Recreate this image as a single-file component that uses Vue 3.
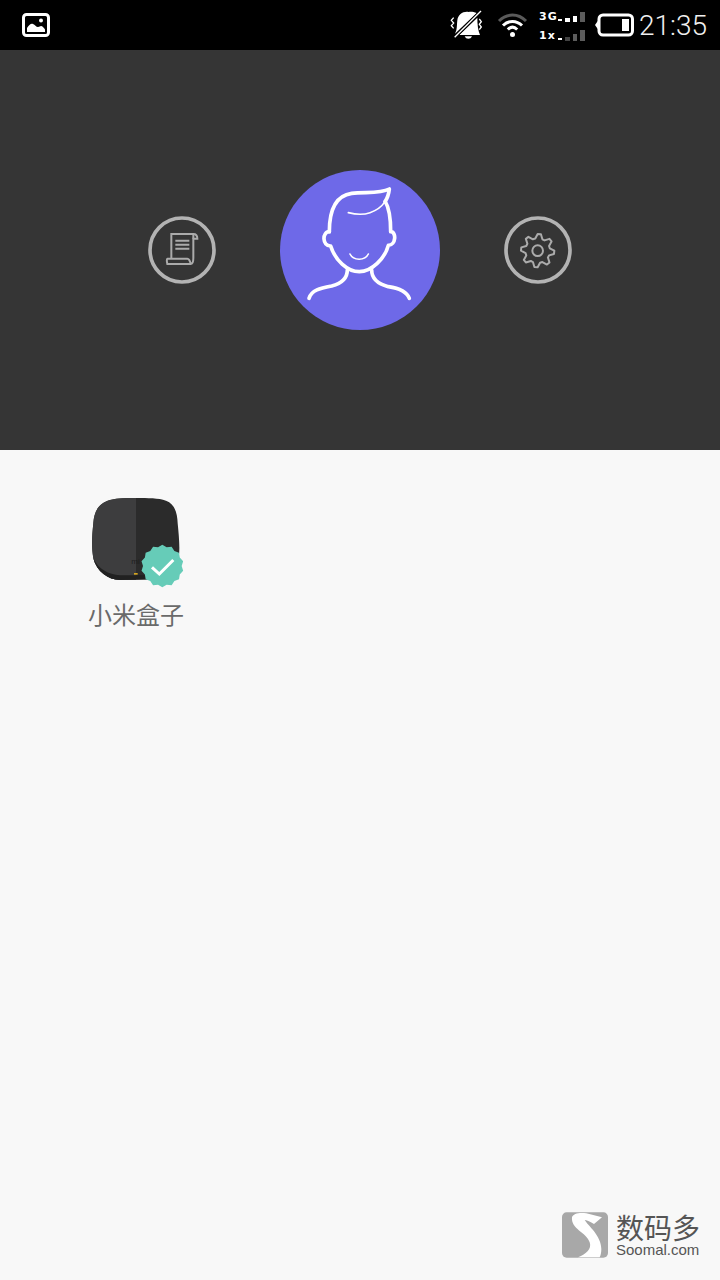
<template>
  <div class="page">
    <div class="status-bar">
      <svg class="pic-icon" width="28" height="24" viewBox="0 0 28 24">
        <rect x="1.500" y="1.500" width="25" height="21" rx="3" fill="none" stroke="#fff" stroke-width="3" />
        <path d="M5 19v-4c2-3 4-5 6-4 2 .8 3 3 5 3 1.500 0 2-1 3-1 1.500 0 3 2 4 3.500V19z" fill="#fff" />
        <circle cx="19" cy="7.500" r="2" fill="#fff" />
      </svg>
      <div class="status-right">
        <svg class="bell" width="40" height="36" viewBox="0 0 120 108">
          <path d="M92 18C82 14 74 14 68 15 52 12 36 22 34 40 32 56 34 68 27 80Z" fill="#fff" />
          <path d="M94 32C94 52 96 70 102 84H40Z" fill="#fff" />
          <path d="M56 88C60 98 74 98 78 88Z" fill="#fff" />
          <path d="M105 12 26 91" stroke="#000" stroke-width="9" />
          <path d="M105 12 26 91" stroke="#fff" stroke-width="4" />
          <path d="M23 32 16 40 23 48 16 56 23 64M100 36 106 44 100 52 106 60 100 68" fill="none" stroke="#fff" stroke-width="4" />
        </svg>
        <svg class="wifi" width="31" height="26" viewBox="0 0 31 26">
          <path d="M2 9C10 1 21 1 29 9" fill="none" stroke="#5a5a5a" stroke-width="3" />
          <path d="M6 13.500c5.500-5.500 13.500-5.500 19 0" fill="none" stroke="#fff" stroke-width="3" />
          <path d="M10.800 17.500c3-3 6.400-3 9.400 0" fill="none" stroke="#fff" stroke-width="3" />
          <circle cx="15.500" cy="22.500" r="2.500" fill="#fff" />
        </svg>
        <div class="network">
          <div class="net-row">
            <span class="net-label">3G</span>
            <span class="dash"></span>
            <span class="bar s1 on"></span>
            <span class="bar s2 on"></span>
            <span class="bar s3"></span>
          </div>
          <div class="net-row">
            <span class="net-label">1x</span>
            <span class="dash"></span>
            <span class="bar b1"></span>
            <span class="bar b2"></span>
            <span class="bar b3"></span>
          </div>
        </div>
        <svg class="battery" width="39" height="24" viewBox="0 0 39 24">
          <path d="M0 12 3.500 7v10z" fill="#fff" />
          <rect x="4" y="2" width="33.500" height="20" rx="4" fill="none" stroke="#fff" stroke-width="3" />
          <rect x="27" y="6" width="7" height="12" fill="#fff" />
        </svg>
        <span class="time">21:35</span>
      </div>
    </div>

    <div class="header">
      <svg class="round-btn" width="68" height="68" viewBox="24 18 204 204">
        <circle cx="126" cy="120" r="96" fill="none" stroke="#b3b3b3" stroke-width="11" />
        <g fill="none" stroke="#ababab" stroke-width="6">
          <path d="M94 146V72h66c8 0 12 6 12 14h-12v58c0 10-2 18-8 18H82c-2-8-2-16 0-16h60c4 0 8 6 10 16" />
          <path d="M160 72v14" />
          <path d="M106 92h42M106 104h42M106 116h42" />
        </g>
      </svg>

      <div class="avatar">
        <svg width="160" height="160" viewBox="30 30 480 480" fill="none" stroke="#fff" stroke-linecap="round" stroke-linejoin="round">
          <g stroke-width="11">
            <path d="M178 215C178 165 190 108 245 100 285 95 330 102 358 87 356 105 352 115 345 125" />
            <path d="M346 125C358 145 362 180 362 215 380 215 378 256 355 256 345 295 305 335 268 335 232 335 195 300 182 258 156 258 156 215 178 215" />
            <path d="M232 330C232 355 215 370 185 378 150 385 125 390 117 415" />
            <path d="M305 330C305 355 325 372 355 380 390 385 410 395 418 415" />
          </g>
          <g stroke-width="5">
            <path d="M345 125C332 145 318 152 300 158 280 165 255 163 235 158" />
            <path d="M240 282C250 303 285 303 295 282" />
          </g>
        </svg>
      </div>

      <svg class="round-btn" width="68" height="68" viewBox="24 18 204 204">
        <circle cx="126" cy="120" r="96" fill="none" stroke="#b3b3b3" stroke-width="11" />
        <path :d="gearPath" fill="none" stroke="#ababab" stroke-width="6" stroke-linejoin="round" />
        <circle cx="125" cy="122" r="16" fill="none" stroke="#ababab" stroke-width="6" />
      </svg>
    </div>

    <div class="content">
      <div class="device">
        <svg width="96" height="96" viewBox="24 12 288 288">
          <path d="M168 24C205 24 235 24 258 32 285 42 292 70 293 100 296 130 300 170 297 195 292 235 260 262 225 268L120 270C85 270 50 245 40 205 34 170 36 140 40 100 42 65 55 40 90 30 115 24 140 24 168 24Z" fill="#2b2b2b" />
          <path d="M168 24V270H120C85 270 50 245 40 205 34 170 36 140 40 100 42 65 55 40 90 30 115 24 140 24 168 24Z" fill="#3d3d3e" />
          <path d="M40 205C55 238 85 254 120 256H225C260 254 285 232 297 195 292 235 260 262 225 268L120 270C85 270 50 245 40 205Z" fill="#212121" />
          <text x="154" y="222" class="mi">mi</text>
          <rect x="162" y="249" width="11" height="5" fill="#d4a520" />
          <path :d="badgePath" fill="#66ccb8" />
          <path d="M216 232 238 252 280 210" fill="none" stroke="#fff" stroke-width="9" />
        </svg>
        <span class="device-name">小米盒子</span>
      </div>
    </div>

    <div class="watermark">
      <svg class="wm-logo" width="46" height="46" viewBox="22 15 138 136">
        <rect x="22" y="15" width="138" height="136" rx="14" fill="#a8a8a8" />
        <path d="M52 30C55 18 75 15 95 18L142 30 118 50C105 42 95 38 90 38 100 55 140 85 140 125 140 135 138 145 135 150H70C95 140 112 125 105 105 95 75 48 65 52 30Z" fill="#fff" />
      </svg>
      <div class="wm-text">
        <span class="wm-cn">数码多</span>
        <span class="wm-en">Soomal.com</span>
      </div>
    </div>
  </div>
</template>

<script setup>
// star-ish outlines for the gear and the badge
const wavyPath = (cx, cy, outer, inner, teeth, steps) => {
  const pts = [];
  for (let i = 0; i < teeth * steps; i++) {
    const a = (i / (teeth * steps)) * Math.PI * 2 - Math.PI / 2;
    const r = steps === 4
      ? (i % 4 < 2 ? outer : inner)
      : (i % 2 === 0 ? outer : inner);
    pts.push(`${(cx + Math.cos(a) * r).toFixed(1)} ${(cy + Math.sin(a) * r).toFixed(1)}`);
  }
  return 'M' + pts.join('L') + 'Z';
};

const gearPath = wavyPath(125, 122, 50, 37, 8, 4);
const badgePath = wavyPath(247, 228, 64, 58, 14, 2);
</script>

<style scoped>
.page {
  position: relative;
  width: 720px;
  height: 1280px;
  display: flex;
  flex-direction: column;
  background: #f8f8f8;
  overflow: hidden;
}

.status-bar {
  height: 50px;
  background: #000;
  display: flex;
  align-items: center;
  justify-content: space-between;
  padding: 0 13px 0 22px;
}

.status-right {
  display: flex;
  align-items: center;
}

.wifi {
  margin-left: 11px;
}

.network {
  margin-left: 11px;
  width: 49px;
  display: flex;
  flex-direction: column;
  gap: 4px;
  margin-top: -2px;
}

.net-row {
  display: flex;
  align-items: flex-end;
  height: 15px;
}

.net-label {
  width: 17px;
  color: #fff;
  font-family: "DejaVu Sans", sans-serif;
  font-size: 11px;
  font-weight: 700;
  letter-spacing: 1px;
  line-height: 10px;
  text-align: right;
}

.dash {
  width: 5px;
  height: 2px;
  margin: 0 3px 1px 2px;
  background: #fff;
}

.bar {
  width: 5px;
  margin-right: 3px;
  background: #5c5c5c;
}

.bar.on {
  background: #fff;
}

.s1 { height: 4px; }
.s2 { height: 6px; }
.s3 { height: 10px; }
.b1 { height: 4px; background: #444; }
.b2 { height: 7px; }
.b3 { height: 11px; }

.battery {
  margin-left: 7px;
}

.time {
  margin-left: 5px;
  color: #f0f0f0;
  font-family: Roboto, "Liberation Sans", sans-serif;
  font-size: 28px;
  font-weight: 300;
}

.header {
  height: 400px;
  background: #353535;
  display: flex;
  align-items: center;
  justify-content: center;
  gap: 64px;
}

.avatar {
  width: 160px;
  height: 160px;
  border-radius: 50%;
  background: #6e69e8;
}

.avatar svg,
.device svg {
  display: block;
}

.mi {
  fill: #1e1e1e;
  font-family: "Liberation Sans", sans-serif;
  font-size: 24px;
}

.content {
  flex: 1;
  padding: 44px 0 0 88px;
}

.device {
  width: 96px;
  display: flex;
  flex-direction: column;
  align-items: center;
}

.device-name {
  margin-top: 7px;
  color: #6a6a6a;
  font-family: "Noto Sans CJK SC", sans-serif;
  font-size: 24px;
  line-height: 34px;
  white-space: nowrap;
}

.watermark {
  position: absolute;
  left: 562px;
  top: 1212px;
  display: flex;
  gap: 8px;
}

.wm-text {
  display: flex;
  flex-direction: column;
}

.wm-cn {
  color: #555;
  font-family: "Noto Sans CJK SC", sans-serif;
  font-size: 28px;
  line-height: 30px;
}

.wm-en {
  color: #555;
  font-family: "Liberation Sans", sans-serif;
  font-size: 15px;
  line-height: 16px;
}
</style>
